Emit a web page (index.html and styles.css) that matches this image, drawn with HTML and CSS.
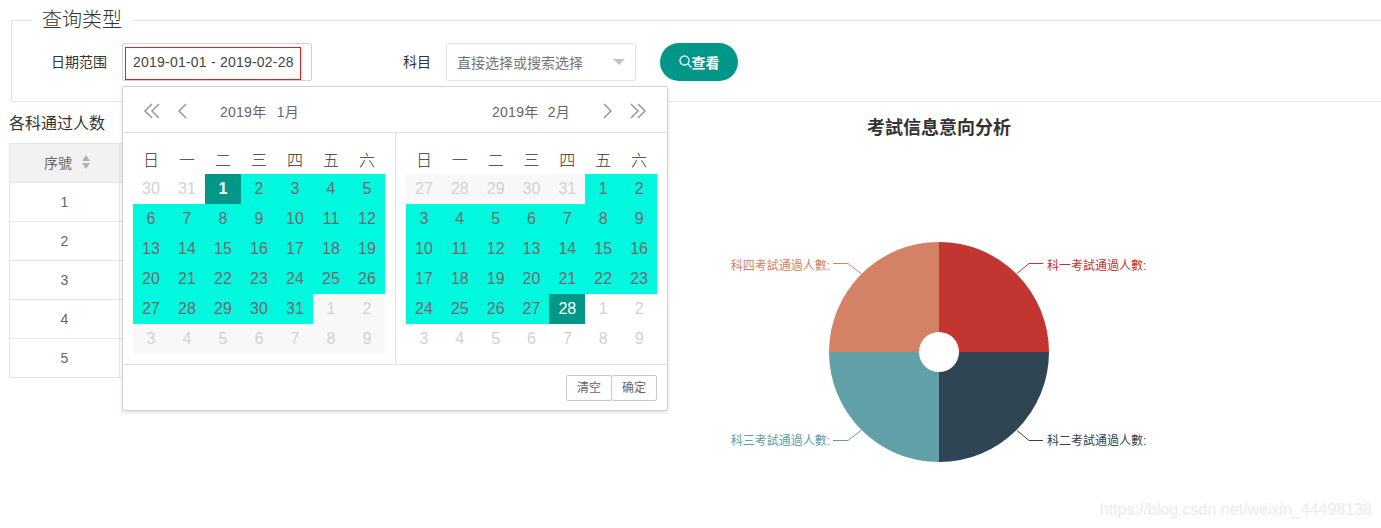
FILE: index.html
```html
<!DOCTYPE html>
<html lang="zh-CN">
<head>
<meta charset="UTF-8" />
<meta name="viewport" content="width=device-width, initial-scale=1" />
<title>考試信息意向分析</title>
<link rel="stylesheet" href="styles.css">
</head>
<body>
  <fieldset class="query-box">
    <legend>查询类型</legend>
    <form class="query-form">
      <label class="field-label">日期范围</label>
      <div class="date-field">
        <div class="date-input"><span class="date-value">2019-01-01 - 2019-02-28</span></div>

        <div class="picker">
          <div class="picker-head">
            <div class="head-side">
              <svg class="nav-icon" width="18" height="16" viewBox="0 0 18 16"><path d="M9 1 2 8l7 7M16 1 9 8l7 7"/></svg>
              <svg class="nav-icon prev" width="10" height="16" viewBox="0 0 10 16"><path d="M9 1 2 8l7 7"/></svg>
              <span class="head-title">2019年&nbsp;&nbsp;1月</span>
            </div>
            <div class="head-side">
              <span class="head-title">2019年&nbsp;&nbsp;2月</span>
              <svg class="nav-icon next" width="10" height="16" viewBox="0 0 10 16"><path d="m1 1 7 7-7 7"/></svg>
              <svg class="nav-icon" width="18" height="16" viewBox="0 0 18 16"><path d="m2 1 7 7-7 7M9 1l7 7-7 7"/></svg>
            </div>
          </div>

          <div class="picker-body">
            <div class="month first">
              <span class="wk">日</span><span class="wk">一</span><span class="wk">二</span><span class="wk">三</span><span class="wk">四</span><span class="wk">五</span><span class="wk">六</span>
              <span class="off">30</span><span class="off">31</span><span class="end bold">1</span><span class="on">2</span><span class="on">3</span><span class="on">4</span><span class="on">5</span>
              <span class="on">6</span><span class="on">7</span><span class="on">8</span><span class="on">9</span><span class="on">10</span><span class="on">11</span><span class="on">12</span>
              <span class="on">13</span><span class="on">14</span><span class="on">15</span><span class="on">16</span><span class="on">17</span><span class="on">18</span><span class="on">19</span>
              <span class="on">20</span><span class="on">21</span><span class="on">22</span><span class="on">23</span><span class="on">24</span><span class="on">25</span><span class="on">26</span>
              <span class="on">27</span><span class="on">28</span><span class="on">29</span><span class="on">30</span><span class="on">31</span><span class="off shade">1</span><span class="off shade">2</span>
              <span class="off shade">3</span><span class="off shade">4</span><span class="off shade">5</span><span class="off shade">6</span><span class="off shade">7</span><span class="off shade">8</span><span class="off shade">9</span>
            </div>
            <div class="month second">
              <span class="wk">日</span><span class="wk">一</span><span class="wk">二</span><span class="wk">三</span><span class="wk">四</span><span class="wk">五</span><span class="wk">六</span>
              <span class="off shade">27</span><span class="off shade">28</span><span class="off shade">29</span><span class="off shade">30</span><span class="off shade">31</span><span class="on">1</span><span class="on">2</span>
              <span class="on">3</span><span class="on">4</span><span class="on">5</span><span class="on">6</span><span class="on">7</span><span class="on">8</span><span class="on">9</span>
              <span class="on">10</span><span class="on">11</span><span class="on">12</span><span class="on">13</span><span class="on">14</span><span class="on">15</span><span class="on">16</span>
              <span class="on">17</span><span class="on">18</span><span class="on">19</span><span class="on">20</span><span class="on">21</span><span class="on">22</span><span class="on">23</span>
              <span class="on">24</span><span class="on">25</span><span class="on">26</span><span class="on">27</span><span class="end">28</span><span class="off">1</span><span class="off">2</span>
              <span class="off">3</span><span class="off">4</span><span class="off">5</span><span class="off">6</span><span class="off">7</span><span class="off">8</span><span class="off">9</span>
            </div>
          </div>

          <div class="picker-foot">
            <span class="foot-btn">清空</span><span class="foot-btn">确定</span>
          </div>
        </div>
      </div>

      <label class="field-label">科目</label>
      <div class="select-field">
        <span>直接选择或搜索选择</span>
        <i class="select-arrow"></i>
      </div>

      <button type="button" class="search-btn">
        <svg width="13" height="14" viewBox="0 0 13 14"><circle cx="5.500" cy="5.500" r="4.500"/><path d="m9 9 3.500 3.500"/></svg>查看
      </button>
    </form>
  </fieldset>

  <div class="content">
    <section class="table-col">
      <div class="table-title">各科通过人数</div>
      <table class="pass-table">
        <thead>
          <tr>
            <th><span class="th-inner">序號<i class="sort"><b class="up"></b><b class="down"></b></i></span></th>
            <th></th>
            <th></th>
          </tr>
        </thead>
        <tbody>
          <tr><td>1</td><td></td><td></td></tr>
          <tr><td>2</td><td></td><td></td></tr>
          <tr><td>3</td><td></td><td></td></tr>
          <tr><td>4</td><td></td><td></td></tr>
          <tr><td>5</td><td></td><td></td></tr>
        </tbody>
      </table>
    </section>

    <section class="chart-col">
      <svg class="pie" width="884" height="426" viewBox="0 0 884 426">
        <text class="pie-title" x="442" y="32" text-anchor="middle">考試信息意向分析</text>
        <path fill="#c23531" d="M442 140a110 110 0 0 1 110 110h-90a20 20 0 0 0-20-20z"/>
        <path fill="#2f4554" d="M552 250a110 110 0 0 1-110 110v-90a20 20 0 0 0 20-20z"/>
        <path fill="#61a0a8" d="M442 360a110 110 0 0 1-110-110h90a20 20 0 0 0 20 20z"/>
        <path fill="#d48265" d="M332 250a110 110 0 0 1 110-110v90a20 20 0 0 0-20 20z"/>
        <path class="lead" stroke="#c23531" d="M520 171.500 532 161.500h14"/>
        <path class="lead" stroke="#2f4554" d="M520 328.500 532 338.500h14"/>
        <path class="lead" stroke="#61a0a8" d="M364 328.500 351 338.500h-15"/>
        <path class="lead" stroke="#d48265" d="M364 171.500 351 161.500h-15"/>
        <text class="pie-label" x="550" y="168" fill="#c23531">科一考試通過人數:</text>
        <text class="pie-label" x="550" y="343" fill="#2f4554">科二考試通過人數:</text>
        <text class="pie-label" x="333" y="343" fill="#61a0a8" text-anchor="end">科三考試通過人數:</text>
        <text class="pie-label" x="333" y="168" fill="#d48265" text-anchor="end">科四考試通過人數:</text>
      </svg>
    </section>
  </div>

  <div class="watermark">https://blog.csdn.net/weixin_44498138</div>
</body>
</html>
```

FILE: styles.css
```css
/* Reset and base */
*, *::before, *::after {
  box-sizing: border-box;
}
html, body {
  height: 100%;
  overflow: hidden;
}
body {
  margin: 0;
  position: relative;
  font-family: "Liberation Sans", "Noto Sans CJK SC", sans-serif;
  font-size: 14px;
  color: #666;
  background: #fff;
}

/* Query box */
.query-box {
  margin: 8px -20px 0 11px;
  padding: 11px 0 20px;
  height: 94px;
  border: 1px solid #e6e6e6;
  min-width: 0;
}
.query-box legend {
  margin-left: 20px;
  padding: 0 10px;
  font-size: 20px;
  font-weight: 300;
  line-height: 24px;
  color: #333;
}
.query-form {
  display: flex;
  align-items: center;
  gap: 24px;
}
.field-label {
  width: 110px;
  padding: 0 15px 2px 0;
  margin-right: -24px;
  text-align: right;
  color: #333;
}
.date-field {
  position: relative;
  width: 190px;
  height: 38px;
}
.date-input {
  height: 38px;
  display: flex;
  align-items: flex-end;
  padding-left: 2px;
  border: 1px solid #d2d2d2;
  border-radius: 2px;
}
.date-value {
  display: block;
  width: 176px;
  height: 33px;
  line-height: 29px;
  padding-left: 7px;
  border: 1px solid #f01c1c;
  color: #444;
  letter-spacing: 0.22px;
}
.select-field {
  width: 190px;
  height: 38px;
  display: flex;
  align-items: center;
  justify-content: space-between;
  padding: 0 10px 1px;
  border: 1px solid #e6e6e6;
  border-radius: 2px;
  color: #757575;
}
.select-arrow {
  border: 6px solid transparent;
  border-top-color: #c2c2c2;
  border-bottom-width: 0;
}
.search-btn {
  width: 78px;
  height: 38px;
  padding: 0;
  border: none;
  border-radius: 19px;
  background-color: #009688;
  color: #fff;
  font-family: inherit;
  font-size: 14px;
  font-weight: 700;
  display: flex;
  align-items: center;
  justify-content: center;
}
.search-btn svg {
  fill: none;
  stroke: #d8efec;
  stroke-width: 1.5;
}

/* Date picker panel */
.picker {
  position: absolute;
  top: 43px;
  left: 0;
  z-index: 10;
  width: 546px;
  height: 325px;
  background: #fff;
  border: 1px solid #d2d2d2;
  border-radius: 2px;
  box-shadow: 0 2px 4px rgba(0,0,0,0.12);
}
.picker-head {
  height: 46px;
  display: flex;
  align-items: center;
  justify-content: space-between;
  padding: 3px 20px 0;
  border-bottom: 1px solid #e2e2e2;
}
.head-side {
  display: flex;
  align-items: center;
}
.nav-icon {
  fill: none;
  stroke: #999;
  stroke-width: 1.5;
}
.nav-icon.prev {
  margin: 0 18px 0 16px;
}
.nav-icon.next {
  margin: 0 16px 0 18px;
}
.head-title {
  letter-spacing: 0.25px;
}
.head-side:first-child .head-title {
  margin-left: 15px;
  word-spacing: 1px;
}
.head-side:last-child .head-title {
  margin-right: 15px;
  word-spacing: 0.5px;
}
.picker-body {
  display: flex;
}
.month {
  display: grid;
  grid-template-columns: repeat(7, 36px);
  grid-auto-rows: 30px;
  padding: 11px 10px 10px;
  font-size: 16px;
  text-align: center;
  line-height: 30px;
}
.month.first {
  border-right: 1px solid #e2e2e2;
}
.month.second {
  grid-template-columns: repeat(7, 35.86px);
}
.wk {
  font-size: 16px;
  line-height: 33px;
  color: #333;
  font-weight: 300;
}
.on {
  background-color: #00f8de;
  color: #75676d;
}
.off {
  color: #d2d2d2;
}
.shade {
  background-color: #f8f8f8;
}
.end {
  background-color: #009688;
  color: #fff;
}
.bold {
  font-weight: 700;
}
.picker-foot {
  height: 46px;
  display: flex;
  justify-content: flex-end;
  align-items: center;
  padding-right: 10px;
  border-top: 1px solid #e2e2e2;
}
.foot-btn {
  width: 46px;
  height: 26px;
  line-height: 24px;
  text-align: center;
  font-size: 12px;
  color: #666;
  border: 1px solid #c9c9c9;
  border-radius: 2px;
}
.foot-btn + .foot-btn {
  margin-left: -1px;
}

/* Table + chart */
.content {
  display: flex;
}
.table-col {
  width: 497px;
  padding-left: 9px;
}
.table-title {
  height: 41px;
  padding-top: 10px;
  line-height: 24px;
  font-size: 16px;
  color: #333;
}
.pass-table {
  width: 470px;
  table-layout: fixed;
  border-collapse: collapse;
}
.pass-table th, .pass-table td {
  height: 39px;
  padding: 0;
  border: 1px solid #e6e6e6;
  text-align: center;
  font-weight: 400;
  color: #666;
}
.pass-table th:first-child, .pass-table td:first-child {
  width: 110px;
}
.pass-table th {
  background-color: #f2f2f2;
}
.th-inner {
  display: inline-flex;
  align-items: center;
  margin: -2px 0 0 5px;
}
.sort {
  display: inline-block;
  margin-left: 10px;
}
.sort b {
  display: block;
  border: 4px solid transparent;
}
.sort .up {
  border-top-width: 0;
  border-bottom: 6px solid #b2b2b2;
  margin-bottom: 2px;
}
.sort .down {
  border-bottom-width: 0;
  border-top: 6px solid #b2b2b2;
}
.pie {
  display: block;
}
.pie-title {
  font-size: 18px;
  font-weight: 700;
  fill: #333;
}
.pie-label {
  font-size: 12px;
}
.lead {
  fill: none;
  stroke-width: 1;
}
.watermark {
  position: absolute;
  top: 501px;
  right: 9px;
  font-size: 16px;
  color: #ebebeb;
}
```
